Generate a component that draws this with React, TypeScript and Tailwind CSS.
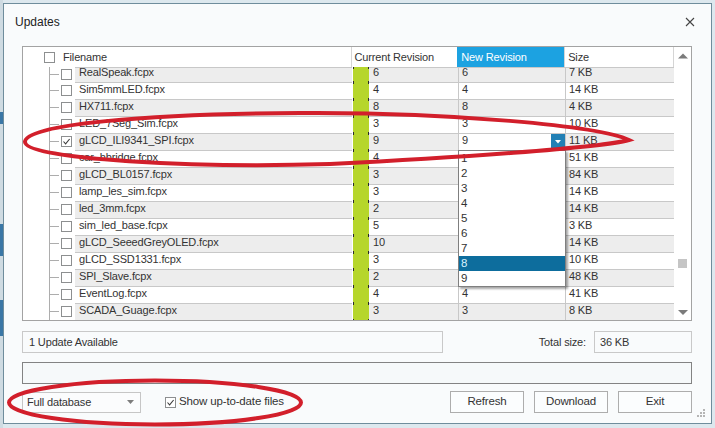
import React from "react";

const rows: [string, string, string, string][] = [
  ["RealSpeak.fcpx", "6", "6", "7 KB"],
  ["Sim5mmLED.fcpx", "4", "4", "14 KB"],
  ["HX711.fcpx", "8", "8", "4 KB"],
  ["LED_7Seg_Sim.fcpx", "3", "3", "10 KB"],
  ["gLCD_ILI9341_SPI.fcpx", "9", "9", "11 KB"],
  ["car_hbridge.fcpx", "4", "", "51 KB"],
  ["gLCD_BL0157.fcpx", "3", "", "84 KB"],
  ["lamp_les_sim.fcpx", "3", "", "14 KB"],
  ["led_3mm.fcpx", "2", "", "14 KB"],
  ["sim_led_base.fcpx", "5", "", "3 KB"],
  ["gLCD_SeeedGreyOLED.fcpx", "10", "", "14 KB"],
  ["gLCD_SSD1331.fcpx", "3", "", "10 KB"],
  ["SPI_Slave.fcpx", "2", "", "48 KB"],
  ["EventLog.fcpx", "4", "4", "41 KB"],
  ["SCADA_Guage.fcpx", "3", "3", "8 KB"],
];

function Check({ checked }: { checked?: boolean }) {
  return (
    <div className="w-[11px] h-[11px] border border-[#8d8f90] bg-white flex items-center justify-center shrink-0">
      {checked && (
        <svg width="9" height="9" viewBox="0 0 9 9">
          <path d="M1.5 4.5 L3.6 6.8 L7.6 2" fill="none" stroke="#3c3c3c" strokeWidth="1.1" />
        </svg>
      )}
    </div>
  );
}

function Marks() {
  return (
    <div className="w-[16px] bg-[#b6d62b] flex flex-col justify-between shrink-0">
      <div className="flex justify-between">
        <span className="w-px h-[2px] bg-[#2a2a2a]" />
        <span className="w-px h-[2px] bg-[#2a2a2a]" />
      </div>
      <div className="flex justify-between">
        <span className="w-px h-[1px] bg-[#2a2a2a]" />
        <span className="w-px h-[1px] bg-[#2a2a2a]" />
      </div>
    </div>
  );
}

function Row({ r, i }: { r: [string, string, string, string]; i: number }) {
  const gray = i % 2 === 0;
  const bg = gray ? "bg-[#ededed]" : "bg-white";
  const h = i === 0 ? "h-[15px]" : "h-[17px]";
  const txt = i === 0 ? "block -mt-[2px] leading-[13px]" : "block leading-[13px]";
  return (
    <div className={`flex ${h} shrink-0`}>
      <div className="w-[52px] flex items-stretch shrink-0 bg-white">
        <div className="w-[26px]" />
        <div className="w-px bg-[#adadad]" />
        <div className="flex items-center">
          <div className="w-[9px] h-px bg-[#adadad]" />
        </div>
        <div className="w-[2px]" />
        <div className="flex items-center">
          <Check checked={i === 4} />
        </div>
      </div>
      <div className={`w-[277px] shrink-0 border-t border-[#c8c8c8] ${bg} pl-[4px] overflow-hidden`}>
        <span className={txt}>{r[0]}</span>
      </div>
      <div className="w-px bg-white shrink-0" />
      <Marks />
      <div className={`w-[89px] shrink-0 border-t border-[#c8c8c8] ${bg} pl-[4px] overflow-hidden`}>
        <span className={txt}>{r[1]}</span>
      </div>
      {i === 4 ? (
        <div className="w-[107px] shrink-0 border-t border-l border-[#c8c8c8] bg-white pl-[3px] flex justify-between items-start">
          <span className={txt}>{r[2]}</span>
          <div className="w-[14px] h-[15px] bg-[#2280b5] flex items-center justify-center">
            <svg width="6" height="4" viewBox="0 0 6 4">
              <path d="M0 0 L6 0 L3 3.5 Z" fill="#ffffff" />
            </svg>
          </div>
        </div>
      ) : (
        <div className={`w-[107px] shrink-0 border-t border-l border-[#c8c8c8] ${bg} pl-[3px] overflow-hidden`}>
          <span className={txt}>{r[2]}</span>
        </div>
      )}
      <div className={`w-[109px] shrink-0 border-t border-l border-[#c8c8c8] ${bg} pl-[3px] overflow-hidden`}>
        <span className={txt}>{r[3]}</span>
      </div>
    </div>
  );
}

function Btn({ label }: { label: string }) {
  return (
    <div className="w-[74px] h-[22px] border border-[#adadad] bg-[#fbfdfe] flex items-center justify-center text-[11.5px] text-[#333]">
      {label}
    </div>
  );
}

export default function App() {
  return (
    <div className="relative w-[715px] h-[428px] overflow-hidden bg-[#dde8ee] flex font-['Liberation_Sans',Arial,sans-serif] text-[11px] text-[#333] tracking-[-0.15px]">
      {/* background app strip */}
      <div className="w-[3px] flex flex-col bg-[#cfdbe2] shrink-0">
        <div className="h-[112px]" />
        <div className="h-[12px] bg-[#3b77a6]" />
        <div className="h-[100px]" />
        <div className="h-[32px] bg-[#3b77a6]" />
        <div className="h-[44px]" />
        <div className="h-[36px] bg-[#3b77a6]" />
      </div>

      <div className="flex-1 flex flex-col pt-[3px] pr-[3px] pb-[4px]">
        <div className="flex-1 border border-[#6f8d9c] bg-[#f9fbfc] flex flex-col">
          {/* title bar */}
          <div className="h-[36px] flex items-center justify-between pl-[11px] pr-[16px] shrink-0">
            <span className="text-[12px] tracking-normal text-[#222]">Updates</span>
            <svg width="10" height="10" viewBox="0 0 10 10">
              <path d="M1 1 L9 9 M9 1 L1 9" stroke="#444" strokeWidth="1.1" />
            </svg>
          </div>

          <div className="flex flex-col pl-[18px] pr-[19px] mt-[6px]">
            {/* grid */}
            <div className="relative h-[275px] border border-[#a3a3a3] bg-white flex overflow-hidden shrink-0">
              <div className="w-[651px] flex flex-col overflow-hidden">
                {/* header */}
                <div className="h-[20px] flex shrink-0 border-r border-[#d5d5d5]">
                  <div className="w-[328px] flex items-center pl-[21px]">
                    <Check />
                    <span className="ml-[8px]">Filename</span>
                  </div>
                  <div className="w-[107px] border-l border-[#d5d5d5] flex items-center pl-[3px]">Current Revision</div>
                  <div className="w-[107px] bg-[#1ca2e1] text-white flex items-center pl-[4px]">New Revision</div>
                  <div className="w-[109px] border-l border-[#d5d5d5] flex items-center pl-[3px]">Size</div>
                </div>
                {rows.map((r, i) => (
                  <Row key={i} r={r} i={i} />
                ))}
              </div>
              {/* scrollbar */}
              <div className="w-[17px] flex flex-col items-center">
                <svg className="mt-[6px]" width="10" height="6" viewBox="0 0 10 6">
                  <path d="M0 5.5 L5 0.5 L10 5.5 Z" fill="#7b7b7b" />
                </svg>
                <div className="mt-[200px] w-[9px] h-[9px] bg-[#c5c5c5]" />
                <svg className="mt-[42px]" width="10" height="5" viewBox="0 0 10 5">
                  <path d="M0 0 L10 0 L5 5 Z" fill="#7b7b7b" />
                </svg>
              </div>

              {/* dropdown list */}
              <div className="absolute left-[435px] top-[103px] w-[108px] border border-[#7f7f7f] bg-white shadow-[2px_2px_2px_rgba(0,0,0,0.35)] flex flex-col text-[11.5px]">
                {["1", "2", "3", "4", "5", "6", "7", "8", "9"].map((n) => (
                  <div
                    key={n}
                    className={
                      n === "8"
                        ? "h-[15px] leading-[15px] pl-[2px] bg-[#0d6d9d] text-[#d9f1ff]"
                        : "h-[15px] leading-[15px] pl-[2px]"
                    }
                  >
                    {n}
                  </div>
                ))}
              </div>
            </div>

            {/* status row */}
            <div className="mt-[10px] flex items-center h-[22px]">
              <div className="w-[421px] h-[22px] border border-[#c9c9c9] flex items-center pl-[6px]">1 Update Available</div>
              <div className="flex-1 flex items-center justify-end">
                <span className="mr-[8px]">Total size:</span>
                <div className="w-[98px] h-[22px] border border-[#c9c9c9] flex items-center pl-[5px]">36 KB</div>
              </div>
            </div>

            {/* progress */}
            <div className="mt-[9px] h-[22px] border border-[#838383] bg-[#f6f9fa]" />

            {/* bottom row */}
            <div className="mt-[7px] flex items-center h-[22px]">
              <div className="w-[119px] h-[21px] border border-[#c6c6c6] bg-[#fbfcfd] flex items-center justify-between pl-[4px] pr-[6px]">
                <span>Full database</span>
                <svg width="7" height="4" viewBox="0 0 7 4">
                  <path d="M0 0 L7 0 L3.5 4 Z" fill="#7d7d7d" />
                </svg>
              </div>
              <div className="ml-[24px] flex items-center">
                <Check checked />
                <span className="ml-[3px] text-[11.5px]">Show up-to-date files</span>
              </div>
              <div className="flex-1 flex justify-end gap-[10px]">
                <Btn label="Refresh" />
                <Btn label="Download" />
                <Btn label="Exit" />
              </div>
            </div>
          </div>
        </div>
      </div>

      {/* resize grip */}
      <div className="absolute left-[697px] top-[409px] grid grid-cols-3 gap-[1px]">
        <span />
        <span />
        <span className="w-[2px] h-[2px] bg-[#b5b5b5]" />
        <span />
        <span className="w-[2px] h-[2px] bg-[#b5b5b5]" />
        <span className="w-[2px] h-[2px] bg-[#b5b5b5]" />
        <span className="w-[2px] h-[2px] bg-[#b5b5b5]" />
        <span className="w-[2px] h-[2px] bg-[#b5b5b5]" />
        <span className="w-[2px] h-[2px] bg-[#b5b5b5]" />
      </div>

      {/* red annotations */}
      <svg className="absolute inset-0 pointer-events-none" width="715" height="428" viewBox="0 0 715 428">
        <path
          d="M25 142 C24 124 150 114 300 113 C450 112 600 126 629 140 C600 148 450 158 330 164 C200 168 26 160 25 142 Z"
          fill="none"
          stroke="#d21f2b"
          strokeWidth="4"
        />
        <ellipse cx="155" cy="402.5" rx="146" ry="22" fill="none" stroke="#d21f2b" strokeWidth="4" />
      </svg>
    </div>
  );
}
